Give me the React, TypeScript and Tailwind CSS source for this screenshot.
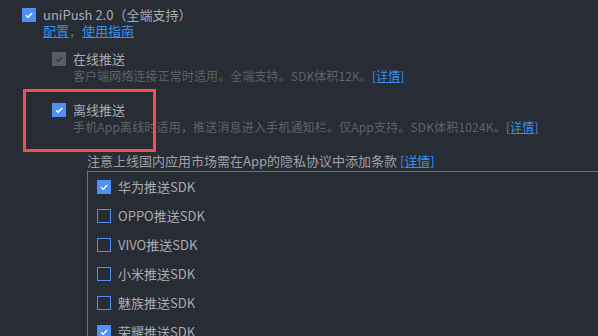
import React from "react";

const font = { fontFamily: '"Noto Sans CJK SC", "Noto Sans", sans-serif' };

function Check({ state }: { state: "on" | "off" | "disabled" }) {
  if (state === "off") {
    return <div className="w-[14px] h-[14px] shrink-0 border-[1.5px] border-[#4f8ff7] box-border" />;
  }
  const bg = state === "on" ? "bg-[#4f8ff7]" : "bg-[#595d63]";
  const stroke = state === "on" ? "#ffffff" : "#33373d";
  return (
    <div className={`w-[14px] h-[14px] shrink-0 ${bg} flex items-center justify-center`}>
      <svg width="10" height="10" viewBox="0 0 10 10">
        <polyline points="2,5.2 4.2,7.3 8.2,3" fill="none" stroke={stroke} strokeWidth="1.4" />
      </svg>
    </div>
  );
}

const items: [string, "on" | "off"][] = [
  ["华为推送SDK", "on"],
  ["OPPO推送SDK", "off"],
  ["VIVO推送SDK", "off"],
  ["小米推送SDK", "off"],
  ["魅族推送SDK", "off"],
  ["荣耀推送SDK", "on"],
];

export default function App() {
  return (
    <div
      className="relative w-[598px] h-[336px] overflow-hidden bg-[#282c34] text-[13px] text-[#a9acb2]"
      style={font}
    >
      <div className="flex flex-col pt-[6px]">
        <div className="flex items-center gap-[7px] pl-[22px] h-[17px] leading-[17px]">
          <Check state="on" />
          <span>uniPush 2.0（全端支持）</span>
        </div>
        <div className="pl-[43px] h-[16px] leading-[16px] text-[#3b8eea]">
          <span className="underline">配置</span>
          <span className="text-[#6b6f76]">，</span>
          <span className="underline">使用指南</span>
        </div>
        <div className="mt-[11px] flex items-center gap-[7px] pl-[52px] h-[17px] leading-[17px]">
          <Check state="disabled" />
          <span>在线推送</span>
        </div>
        <div className="mt-[1px] pl-[73px] h-[16px] leading-[16px] text-[12px] tracking-[0.1px] text-[#5f636a] whitespace-nowrap">
          客户端网络连接正常时适用。全端支持。SDK体积12K。
          <span className="text-[#3b8eea] underline">[详情]</span>
        </div>
        <div className="mt-[17px] flex items-center gap-[7px] pl-[52px] h-[17px] leading-[17px]">
          <Check state="on" />
          <span>离线推送</span>
        </div>
        <div className="mt-[1px] pl-[73px] h-[16px] leading-[16px] text-[12px] tracking-[0.17px] text-[#5f636a] whitespace-nowrap">
          手机App离线时适用，推送消息进入手机通知栏。仅App支持。SDK体积1024K。
          <span className="text-[#3b8eea] underline">[详情]</span>
        </div>
        <div className="mt-[18px] pl-[87px] h-[16px] leading-[16px] text-[#9da1a8] whitespace-nowrap">
          注意上线国内应用市场需在App的隐私协议中添加条款 <span className="text-[#3b8eea] underline">[详情]</span>
        </div>
        <div className="mt-[2px] ml-[87px] w-[620px] border border-[#6e727a] pt-[6px] pl-[9px] flex flex-col gap-[12px] pb-[10px]">
          {items.map(([label, st]) => (
            <div key={label} className="flex items-center gap-[7px] h-[17px] leading-[17px]">
              <Check state={st} />
              <span>{label}</span>
            </div>
          ))}
        </div>
      </div>
      <div className="absolute left-[23px] top-[89px] w-[133px] h-[63px] border-[3px] border-[#f0504f]" />
    </div>
  );
}
